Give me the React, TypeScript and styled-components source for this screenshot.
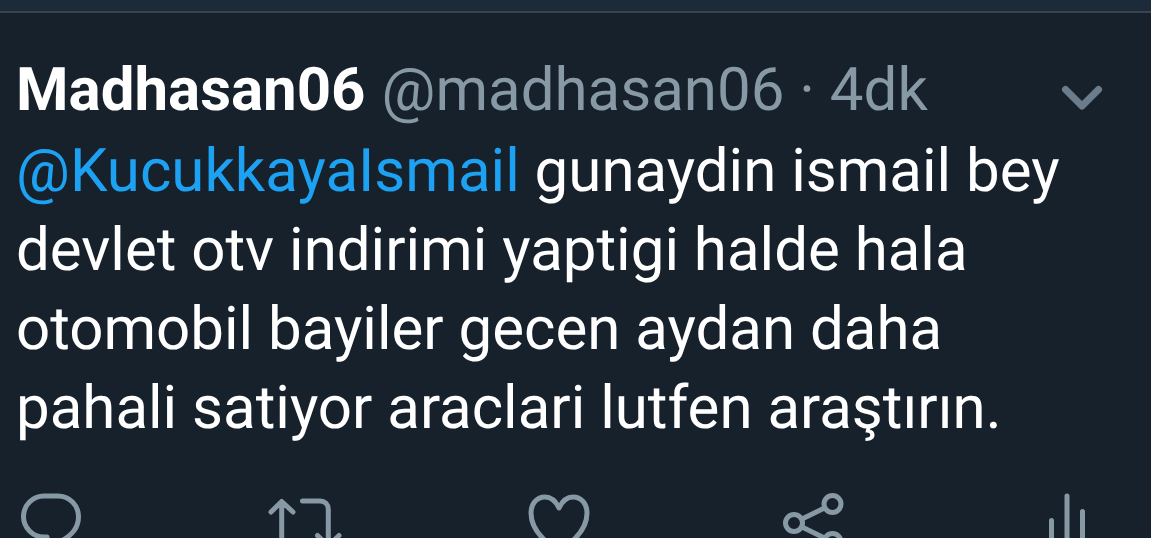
import React from "react";
import styled, { createGlobalStyle } from "styled-components";

const GlobalStyle = createGlobalStyle`
  * { box-sizing: border-box; }
  body {
    margin: 0;
    background: #17212b;
    font-family: Roboto, "Noto Sans", sans-serif;
    text-rendering: geometricPrecision;
  }
`;

const Screen = styled.main`
  height: 100vh;
  overflow: hidden;
  background: #17212b;
`;

const TopBar = styled.div`
  height: 13px;
  background: #1c2a3a;
  border-bottom: 2px solid #38444e;
`;

const Tweet = styled.article`
  padding: 37px 49px 24px 16px;
  font-size: 60px;
  line-height: 79px;
  color: #ffffff;
`;

const Header = styled.header`
  display: flex;
  align-items: baseline;
  justify-content: space-between;
  margin-bottom: 2px;
`;

const Byline = styled.div`
  display: flex;
  gap: 16px;
  white-space: nowrap;
`;

const Name = styled.strong`
  font-weight: 700;
`;

const Meta = styled.span`
  color: #8899a6;
`;

const Body = styled.p`
  margin: 0;
`;

const Mention = styled.a`
  color: #1da1f2;
  text-decoration: none;
`;

const IconButton = styled.button<{ $tone: string }>`
  flex: none;
  padding: 0;
  border: 0;
  background: none;
  color: ${(p) => p.$tone};
  font-size: 16px;
  line-height: 1;
  cursor: pointer;
`;

const Icon = styled.svg<{ $stroke: number }>`
  display: inline-block;
  overflow: visible;
  vertical-align: baseline;
  fill: none;
  stroke: currentColor;
  stroke-width: ${(p) => p.$stroke};
  stroke-linecap: round;
  stroke-linejoin: round;
`;

const Actions = styled.footer`
  display: flex;
  justify-content: space-between;
  margin-top: 37px;
`;

const actions = [
  {
    label: "Yanıtla",
    shape: (
      <path d="M33 53H30a20.500 20.500 0 0 1 0-41H44a20.500 20.500 0 0 1 20.500 20.500c0 12-7 18-14.500 23L33 66V53" />
    ),
  },
  {
    label: "Retweetle",
    shape: (
      <path d="M3 28L13.700 17.500L25 28M13.700 18V54a8 8 0 0 0 8 8H39M34.500 17H52.300a8 8 0 0 1 8 8V61M49.500 51.500L60.300 62L71 51.500" />
    ),
  },
  {
    label: "Beğen",
    shape: (
      <path d="M37 24C33.500 16.500 28.500 13 23 13C15 13 9 19.500 9 29C9 39 14.500 48 21 54.500C26.500 60 32.500 64 37 66C41.500 64 47.500 60 53 54.500C59.500 48 65 39 65 29C65 19.500 59 13 51 13C45.500 13 40.500 16.500 37 24Z" />
    ),
  },
  {
    label: "Paylaş",
    shape: (
      <>
        <circle cx="18" cy="39" r="8.500" />
        <circle cx="56.500" cy="20" r="8.500" />
        <circle cx="56.500" cy="58" r="8.500" />
        <path d="M26 35L48.500 24M26 43L48.500 54" />
      </>
    ),
  },
  {
    label: "İstatistikler",
    shape: <path d="M21.500 36.500V62M37 12V62M52.500 27.500V62" />,
  },
];

export default function App() {
  return (
    <>
      <GlobalStyle />
      <Screen>
        <TopBar />
        <Tweet>
          <Header>
            <Byline>
              <Name>Madhasan06</Name>
              <Meta>@madhasan06 · 4dk</Meta>
            </Byline>
            <IconButton type="button" $tone="#6b7d8c" aria-label="Diğer">
              <Icon $stroke={7} width="40" height="24" viewBox="0 0 40 24">
                <path d="M3.500 3.500L20 20L36.500 3.500" />
              </Icon>
            </IconButton>
          </Header>
          <Body>
            <Mention href="#">@KucukkayaIsmail</Mention> gunaydin ismail bey
            devlet otv indirimi yaptigi halde hala otomobil bayiler gecen aydan
            daha pahali satiyor araclari lutfen araştırın.
          </Body>
          <Actions>
            {actions.map((a) => (
              <IconButton
                key={a.label}
                type="button"
                $tone="#8899a6"
                aria-label={a.label}
              >
                <Icon $stroke={5} width="70" height="74" viewBox="2 0 70 74">
                  {a.shape}
                </Icon>
              </IconButton>
            ))}
          </Actions>
        </Tweet>
      </Screen>
    </>
  );
}
